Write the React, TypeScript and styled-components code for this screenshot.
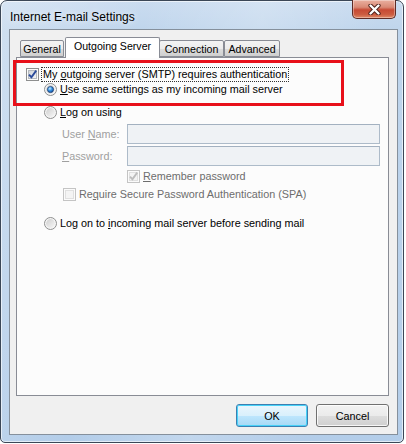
import styled, { createGlobalStyle } from "styled-components";

const Global = createGlobalStyle`
  html, body {
    margin: 0;
    padding: 0;
    background: #ffffff;
  }
  body {
    font-family: "Liberation Sans", Arial, sans-serif;
    font-size: 10.8px;
    color: #000;
  }
`;

const Window = styled.div`
  position: relative;
  width: 404px;
  height: 443px;
  box-sizing: border-box;
  border: 1px solid #3b4757;
  border-radius: 7px 7px 5px 5px;
  background:
    linear-gradient(100deg, rgba(255, 255, 255, 0.25) 0, rgba(255, 255, 255, 0) 30%, rgba(255, 255, 255, 0.2) 55%, rgba(255, 255, 255, 0) 80%),
    linear-gradient(to bottom, #cadcf0 0, #bfd5ec 30px, #b3cde9 100%);
  box-shadow: inset 0 0 0 1px rgba(255, 255, 255, 0.6);
  display: flex;
  flex-direction: column;
  padding: 0 5px 7px 8px;
`;

const TitleBar = styled.div`
  height: 28px;
  display: flex;
  align-items: flex-start;
`;

const Title = styled.div`
  font-size: 12px;
  line-height: 14px;
  padding: 9px 0 0 1px;
  color: #000;
  text-shadow: 0 0 6px rgba(255, 255, 255, 0.9);
`;

const CloseButton = styled.div`
  margin-left: auto;
  margin-top: -1px;
  margin-right: 2px;
  width: 44px;
  height: 19px;
  box-sizing: border-box;
  border: 1px solid #5e2c26;
  border-top: none;
  border-radius: 0 0 5px 5px;
  background: linear-gradient(to bottom, #eab0a0 0, #d98a76 40%, #c74a34 55%, #cc5c40 80%, #e08a68 100%);
  box-shadow: inset 0 0 0 1px rgba(255, 255, 255, 0.35);
  display: flex;
  align-items: center;
  justify-content: center;
`;

const Client = styled.div`
  flex: 1;
  background: #f0f0f0;
  border: 1px solid #85909c;
  display: flex;
  flex-direction: column;
  padding: 7px 7px 0 6px;
`;

const TabStrip = styled.div`
  display: flex;
  align-items: flex-end;
  height: 20px;
  padding-left: 4px;
`;

const Tab = styled.div<{ $active?: boolean; $w: number; $ml?: number }>`
  position: relative;
  z-index: ${(p) => (p.$active ? 2 : 1)};
  box-sizing: border-box;
  width: ${(p) => p.$w}px;
  height: ${(p) => (p.$active ? 21 : 17)}px;
  margin-left: ${(p) => p.$ml ?? 0}px;
  margin-bottom: ${(p) => (p.$active ? -1 : 0)}px;
  border: 1px solid #898c95;
  border-bottom: ${(p) => (p.$active ? "none" : "1px solid #898c95")};
  border-radius: 2px 2px 0 0;
  background: ${(p) =>
    p.$active ? "#ffffff" : "linear-gradient(to bottom, #f3f3f3 0, #ececec 50%, #dddddd 51%, #cfcfcf 100%)"};
  display: flex;
  justify-content: center;
  align-items: ${(p) => (p.$active ? "flex-start" : "center")};
  padding-top: ${(p) => (p.$active ? 2 : 0)}px;
  font-size: 10.6px;
  white-space: nowrap;
`;

const Panel = styled.div`
  position: relative;
  z-index: 1;
  box-sizing: border-box;
  height: 339px;
  margin-right: 1px;
  background: #fcfcfc;
  border: 1px solid #898c95;
  display: flex;
  flex-direction: column;
  padding-left: 9px;
`;

const Row = styled.div<{ $mt: number; $indent?: number; $h?: number }>`
  display: flex;
  align-items: center;
  height: ${(p) => p.$h ?? 14}px;
  margin-top: ${(p) => p.$mt}px;
  padding-left: ${(p) => p.$indent ?? 0}px;
  white-space: nowrap;
`;

const Label = styled.span<{ $tone?: "normal" | "dim" | "faint" }>`
  margin-left: 3px;
  line-height: 14px;
  color: ${(p) => (p.$tone === "faint" ? "#a0a0a0" : p.$tone === "dim" ? "#6d6d6d" : "#000")};
`;

const FocusLabel = styled.span`
  margin-left: 2px;
  line-height: 13px;
  padding: 0 1px;
  border: 1px dotted #333;
`;

const FieldLabel = styled.span`
  width: 65px;
  color: #a0a0a0;
`;

const Field = styled.div`
  box-sizing: border-box;
  width: 253px;
  height: 20px;
  border: 1px solid #adbbc9;
  border-top-color: #a3b1c0;
  background: #eff2f5;
`;

const Highlight = styled.div`
  position: absolute;
  left: 12px;
  top: 59px;
  width: 331px;
  height: 46px;
  box-sizing: border-box;
  border: 3px solid #e8101a;
  z-index: 5;
  pointer-events: none;
`;

const Footer = styled.div`
  display: flex;
  justify-content: flex-end;
  gap: 8px;
  margin-top: 8px;
  padding-right: 1px;
`;

const Button = styled.button<{ $default?: boolean; $w: number }>`
  width: ${(p) => p.$w}px;
  height: 23px;
  box-sizing: border-box;
  border-radius: 3px;
  border: 1px solid ${(p) => (p.$default ? "#3c7fb1" : "#707070")};
  background: ${(p) =>
    p.$default
      ? "linear-gradient(to bottom, #eaf6fd 0, #d9f0fc 50%, #bee6fd 51%, #a7d9f5 100%)"
      : "linear-gradient(to bottom, #f2f2f2 0, #ebebeb 50%, #dddddd 51%, #cfcfcf 100%)"};
  box-shadow: inset 0 0 0 1px ${(p) => (p.$default ? "#48d2f8" : "rgba(255,255,255,0.8)")};
  font-family: "Liberation Sans", Arial, sans-serif;
  font-size: 10.8px;
  color: #000;
  padding: 0;
`;

function CloseGlyph() {
  return (
    <svg width="13" height="11" viewBox="0 0 13 11">
      <path d="M2.5 1.5 L10.5 9.5 M10.5 1.5 L2.5 9.5" stroke="#4a1e18" strokeWidth="4.2" strokeLinecap="round" />
      <path d="M2.5 1.5 L10.5 9.5 M10.5 1.5 L2.5 9.5" stroke="#ffffff" strokeWidth="2.4" strokeLinecap="round" />
    </svg>
  );
}

function Radio({ checked }: { checked?: boolean }) {
  return (
    <svg width="13" height="13" viewBox="0 0 13 13">
      <defs>
        <linearGradient id="radioFill" x1="0" y1="0" x2="1" y2="1">
          <stop offset="0" stopColor="#cfcfcf" />
          <stop offset="1" stopColor="#f7f7f7" />
        </linearGradient>
        <radialGradient id="radioDot" cx="0.4" cy="0.35" r="0.75">
          <stop offset="0" stopColor="#c9ecff" />
          <stop offset="0.45" stopColor="#3592e3" />
          <stop offset="1" stopColor="#0a3b8a" />
        </radialGradient>
      </defs>
      <circle cx="6.5" cy="6.5" r="6" fill="#f5f5f5" stroke="#8e8f8f" />
      <circle cx="6.5" cy="6.5" r="4.4" fill="url(#radioFill)" />
      {checked && <circle cx="6.5" cy="6.5" r="3.1" fill="url(#radioDot)" stroke="#1a3868" strokeWidth="0.7" />}
    </svg>
  );
}

function Check({ checked, disabled }: { checked?: boolean; disabled?: boolean }) {
  return (
    <svg width="13" height="13" viewBox="0 0 13 13">
      <defs>
        <linearGradient id="checkFill" x1="0" y1="0" x2="1" y2="1">
          <stop offset="0" stopColor="#cdd2d8" />
          <stop offset="1" stopColor="#f6f6f6" />
        </linearGradient>
      </defs>
      <rect x="0.5" y="0.5" width="12" height="12" fill="#fbfbfb" stroke={disabled ? "#c4c4c4" : "#8e8f8f"} />
      <rect x="2.5" y="2.5" width="8" height="8" fill={disabled ? "#f4f4f4" : "url(#checkFill)"} stroke={disabled ? "#e0e0e0" : "#b4b9bf"} />
      {checked && (
        <path
          d="M3 6.6 L5.4 9.2 L10.2 2.6"
          fill="none"
          stroke={disabled ? "#bdbdbd" : "#2a4a9a"}
          strokeWidth="1.9"
        />
      )}
    </svg>
  );
}

export default function App() {
  return (
    <>
      <Global />
      <Window>
        <TitleBar>
          <Title>Internet E-mail Settings</Title>
          <CloseButton>
            <CloseGlyph />
          </CloseButton>
        </TitleBar>
        <Client>
          <TabStrip>
            <Tab $w={44}>General</Tab>
            <Tab $w={95} $ml={1} $active>
              Outgoing Server
            </Tab>
            <Tab $w={65} $ml={-1}>
              Connection
            </Tab>
            <Tab $w={56}>Advanced</Tab>
          </TabStrip>
          <Panel>
            <Row $mt={9}>
              <Check checked />
              <FocusLabel>
                My <u>o</u>utgoing server (SMTP) requires authentication
              </FocusLabel>
            </Row>
            <Row $mt={1} $indent={18}>
              <Radio checked />
              <Label>
                <u>U</u>se same settings as my incoming mail server
              </Label>
            </Row>
            <Row $mt={9} $indent={18}>
              <Radio />
              <Label>
                <u>L</u>og on using
              </Label>
            </Row>
            <Row $mt={5} $indent={36} $h={20}>
              <FieldLabel>
                User <u>N</u>ame:
              </FieldLabel>
              <Field />
            </Row>
            <Row $mt={2} $indent={36} $h={20}>
              <FieldLabel>
                <u>P</u>assword:
              </FieldLabel>
              <Field />
            </Row>
            <Row $mt={3} $indent={101}>
              <Check checked disabled />
              <Label $tone="dim">
                <u>R</u>emember password
              </Label>
            </Row>
            <Row $mt={4} $indent={37}>
              <Check disabled />
              <Label $tone="dim">
                Re<u>q</u>uire Secure Password Authentication (SPA)
              </Label>
            </Row>
            <Row $mt={15} $indent={18}>
              <Radio />
              <Label>
                Log on to <u>i</u>ncoming mail server before sending mail
              </Label>
            </Row>
          </Panel>
          <Footer>
            <Button $default $w={72}>
              OK
            </Button>
            <Button $w={73}>Cancel</Button>
          </Footer>
        </Client>
        <Highlight />
      </Window>
    </>
  );
}
